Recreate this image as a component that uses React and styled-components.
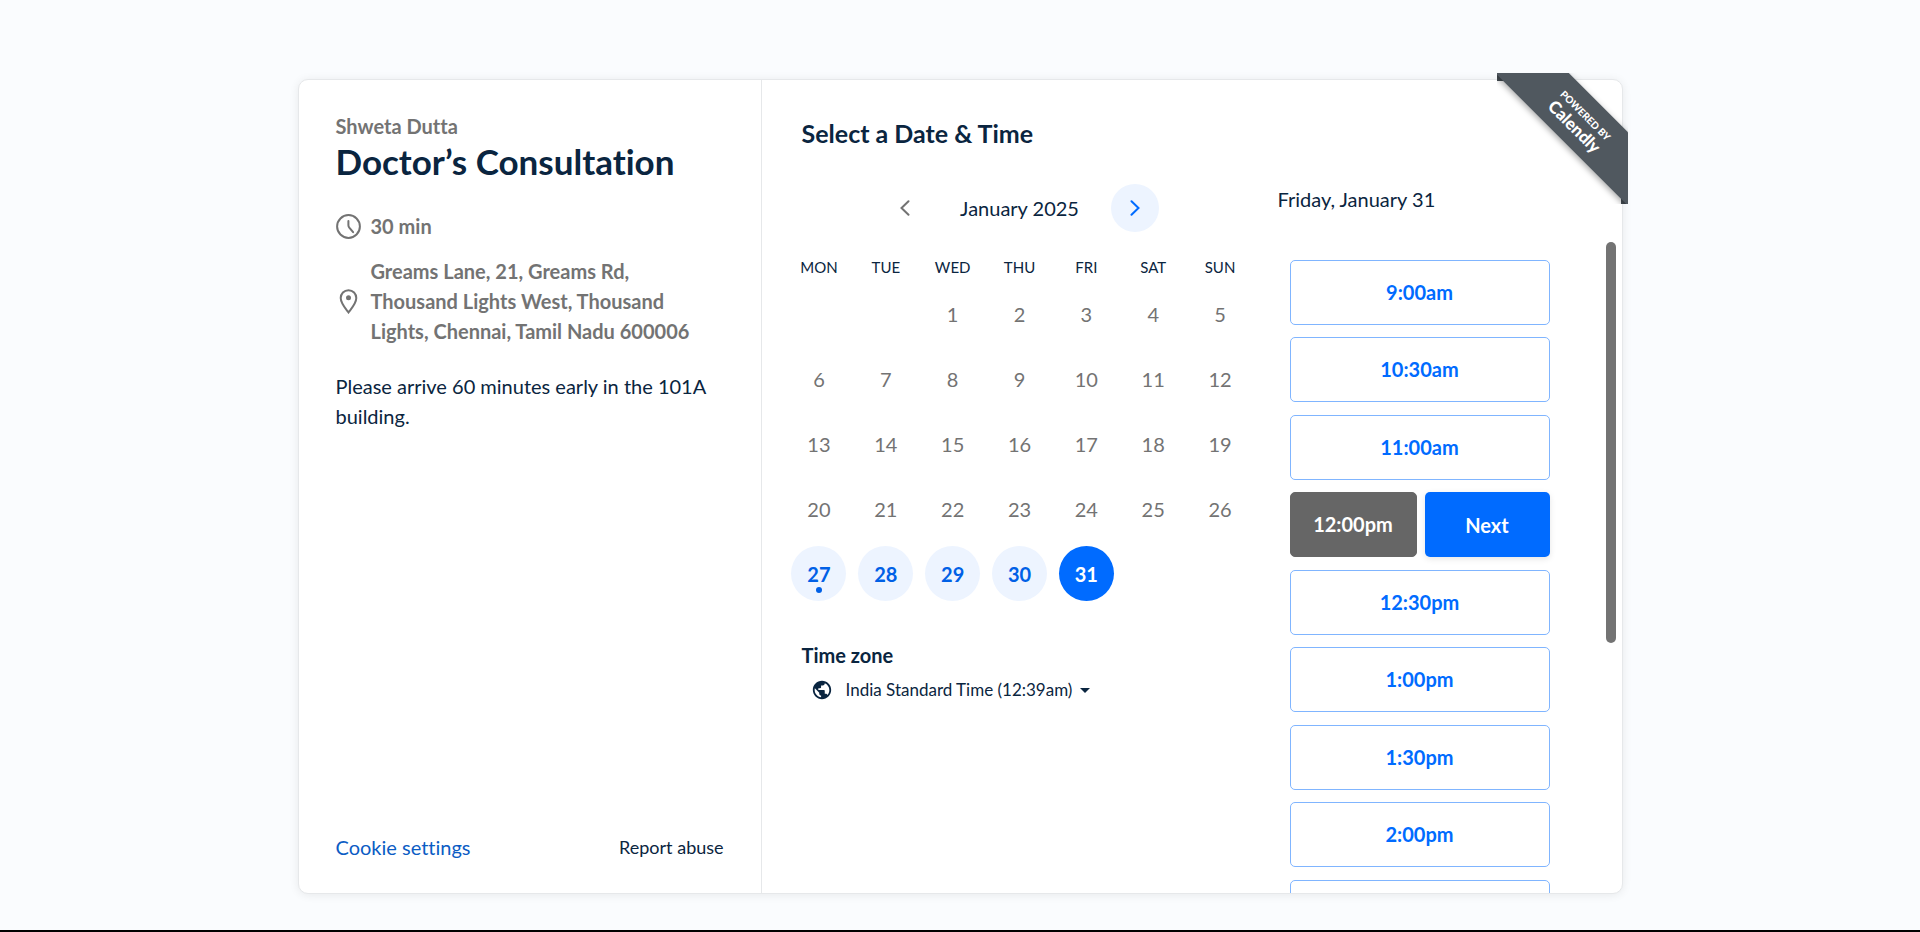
import { useState } from "react";
import styled, { createGlobalStyle } from "styled-components";
import { MdPublic } from "react-icons/md";

const weekDays = ["MON", "TUE", "WED", "THU", "FRI", "SAT", "SUN"];

const weeks = [
  [null, null, 1, 2, 3, 4, 5],
  [6, 7, 8, 9, 10, 11, 12],
  [13, 14, 15, 16, 17, 18, 19],
  [20, 21, 22, 23, 24, 25, 26],
  [27, 28, 29, 30, 31, null, null],
];

const slots = [
  "9:00am",
  "10:30am",
  "11:00am",
  "12:00pm",
  "12:30pm",
  "1:00pm",
  "1:30pm",
  "2:00pm",
  "2:30pm",
];

const today = 27;

const ClockIcon = () => (
  <svg width="25" height="25" viewBox="0 0 25 25" fill="none" stroke="currentColor" strokeWidth="2" aria-hidden="true">
    <circle cx="12.5" cy="12.5" r="11.4" />
    <path d="M12.4 7v4.2c0 1 .3 1.6.9 2.4l3.8 4.600" strokeLinecap="round" />
  </svg>
);

const PinIcon = () => (
  <svg width="25" height="25" viewBox="0 0 25 25" fill="none" stroke="currentColor" strokeWidth="2" aria-hidden="true">
    <path d="M12.5 1.2c-4.500 0-7.800 3.400-7.800 7.900 0 5.300 4.600 10.200 7.800 14.400 3.200-4.200 7.800-9.100 7.800-14.400 0-4.500-3.300-7.900-7.800-7.900z" />
    <circle cx="12.5" cy="8.8" r="2.5" fill="currentColor" stroke="none" />
  </svg>
);

const Chevron = ({ right }) => (
  <svg width="10" height="16" viewBox="0 0 10 16" fill="none" stroke="currentColor" strokeWidth="2" aria-hidden="true">
    <path d={right ? "M1.5 1.2L8.5 8l-7 6.8" : "M8.5 1.2L1.5 8l7 6.8"} strokeLinecap="round" />
  </svg>
);

const EventInfo = () => (
  <InfoPanel>
    <Host>Shweta Dutta</Host>
    <Title>Doctor’s Consultation</Title>
    <Detail>
      <ClockIcon />
      <span>30 min</span>
    </Detail>
    <Detail>
      <PinIcon />
      <span>
        Greams Lane, 21, Greams Rd, Thousand Lights West, Thousand Lights, Chennai, Tamil Nadu 600006
      </span>
    </Detail>
    <Description>Please arrive 60 minutes early in the 101A building.</Description>
    <InfoFooter>
      <CookieLink href="#cookies">Cookie settings</CookieLink>
      <ReportButton type="button">Report abuse</ReportButton>
    </InfoFooter>
  </InfoPanel>
);

const Calendar = ({ selectedDay, setSelectedDay }) => (
  <>
    <MonthNav>
      <NavButton type="button" aria-label="Previous month" disabled>
        <Chevron />
      </NavButton>
      <span>January 2025</span>
      <NavButton type="button" aria-label="Next month">
        <Chevron right />
      </NavButton>
    </MonthNav>
    <Month>
      <thead>
        <tr>
          {weekDays.map((day) => (
            <th key={day} scope="col">{day}</th>
          ))}
        </tr>
      </thead>
      <tbody>
        {weeks.map((week, i) => (
          <tr key={i}>
            {week.map((day, j) => (
              <td key={j}>
                {day && (
                  <Day
                    type="button"
                    disabled={day < today}
                    $selected={day === selectedDay}
                    $today={day === today}
                    onClick={() => setSelectedDay(day)}
                  >
                    {day}
                  </Day>
                )}
              </td>
            ))}
          </tr>
        ))}
      </tbody>
    </Month>
  </>
);

const TimeZone = () => (
  <ZoneSection>
    <ZoneLabel htmlFor="timezone">Time zone</ZoneLabel>
    <ZoneField>
      <MdPublic size={22} aria-hidden="true" />
      <ZoneSelect id="timezone">
        <option>India Standard Time (12:39am)</option>
      </ZoneSelect>
      <svg width="10" height="5" viewBox="0 0 10 5" aria-hidden="true">
        <path d="M0 0h10L5 5z" fill="currentColor" />
      </svg>
    </ZoneField>
  </ZoneSection>
);

const App = () => {
  const [selectedDay, setSelectedDay] = useState(31);
  const [selectedSlot, setSelectedSlot] = useState("12:00pm");

  return (
    <Page>
      <GlobalStyle />
      <Card>
        <EventInfo />
        <Booking>
          <CalendarColumn>
            <Heading>Select a Date &amp; Time</Heading>
            <Calendar selectedDay={selectedDay} setSelectedDay={setSelectedDay} />
            <TimeZone />
          </CalendarColumn>
          <SlotColumn>
            <SlotDate>Friday, January {selectedDay}</SlotDate>
            <Scroller>
              <SlotList>
                {slots.map((slot) => (
                  <li key={slot}>
                    <SlotButton
                      type="button"
                      $selected={slot === selectedSlot}
                      onClick={() => setSelectedSlot(slot)}
                    >
                      {slot}
                    </SlotButton>
                    {slot === selectedSlot && <NextButton type="button">Next</NextButton>}
                  </li>
                ))}
              </SlotList>
              <ScrollTrack>
                <ScrollThumb />
              </ScrollTrack>
            </Scroller>
          </SlotColumn>
        </Booking>
        <Badge>
          <Ribbon href="#calendly">
            <small>POWERED BY</small>
            Calendly
          </Ribbon>
        </Badge>
      </Card>
    </Page>
  );
};

export default App;

const GlobalStyle = createGlobalStyle`
  *, *::before, *::after {
    box-sizing: border-box;
  }

  body {
    margin: 0;
    background: #fafcfe;
    color: #0a2540;
    font-family: Lato, "Open Sans", sans-serif;
    font-size: 20px;
    font-variant-ligatures: none;
    line-height: 30px;
  }

  button, select {
    margin: 0;
    padding: 0;
    border: 0;
    background: none;
    color: inherit;
    font: inherit;
    cursor: pointer;
  }
`;

const Page = styled.main`
  display: flex;
  justify-content: center;
  height: 100vh;
  min-height: 720px;
  padding: 79px 24px 36px;
  border-bottom: 2px solid #000;
`;

const Card = styled.div`
  position: relative;
  display: flex;
  width: 100%;
  max-width: 1325px;
  background: #fff;
  border: 1px solid #e6e8ea;
  border-radius: 10px;
  box-shadow: 0 1px 10px rgba(0, 0, 0, 0.08);
`;

const InfoPanel = styled.section`
  display: flex;
  flex-direction: column;
  flex: 0 0 35%;
  padding: 31px 37px;
  border-right: 1px solid #e6e8ea;
`;

const Host = styled.div`
  color: #737373;
  font-weight: 700;
`;

const Title = styled.h1`
  margin: 0 0 30px;
  font-size: 35px;
  line-height: 40px;
`;

const Detail = styled.div`
  display: flex;
  align-items: center;
  gap: 10px;
  margin-bottom: 15px;
  color: #737373;
  font-weight: 700;

  svg {
    flex: none;
  }

  span {
    max-width: 340px;
  }
`;

const Description = styled.p`
  margin: 10px 0 0;
`;

const InfoFooter = styled.div`
  display: flex;
  align-items: center;
  justify-content: space-between;
  margin-top: auto;
`;

const CookieLink = styled.a`
  color: #0b5cc4;
  text-decoration: none;
`;

const ReportButton = styled.button`
  font-size: 18px;
`;

const Booking = styled.section`
  display: flex;
  flex: 1;
  min-width: 0;
`;

const CalendarColumn = styled.div`
  display: flex;
  flex-direction: column;
  flex: 1;
  padding: 38px 8px 0 24px;
`;

const Heading = styled.h2`
  margin: 0 0 36px 16px;
  font-size: 25px;
  line-height: 30px;
`;

const MonthNav = styled.div`
  display: flex;
  align-items: center;
  justify-content: space-between;
  align-self: center;
  width: 278px;
  margin-bottom: 25px;
`;

const NavButton = styled.button`
  display: flex;
  align-items: center;
  justify-content: center;
  width: 48px;
  height: 48px;
  border-radius: 50%;
  background: #edf4ff;
  color: #006bff;

  &:disabled {
    background: none;
    color: #737373;
    cursor: default;
  }
`;

const Month = styled.table`
  width: 100%;
  table-layout: fixed;
  border-collapse: collapse;
  text-align: center;

  th {
    height: 24px;
    padding: 0 0 4px;
    font-size: 15px;
    font-weight: 400;
    line-height: 20px;
  }

  td {
    height: 65px;
    padding: 0;
  }
`;

const Day = styled.button`
  position: relative;
  display: block;
  width: 55px;
  height: 55px;
  margin: 0 auto;
  border-radius: 50%;
  background: ${(props) => (props.$selected ? "#006bff" : "#edf4ff")};
  color: ${(props) => (props.$selected ? "#fff" : "#0060e6")};
  font-weight: 700;

  &:disabled {
    background: none;
    color: #737373;
    font-weight: 400;
    cursor: default;
  }

  &::after {
    content: "";
    display: ${(props) => (props.$today ? "block" : "none")};
    position: absolute;
    bottom: 8px;
    left: 50%;
    width: 6px;
    height: 6px;
    margin-left: -3px;
    border-radius: 50%;
    background: currentColor;
  }
`;

const ZoneSection = styled.div`
  margin: 34px 0 0 16px;
`;

const ZoneLabel = styled.label`
  font-weight: 700;
`;

const ZoneField = styled.div`
  display: flex;
  align-items: center;
  height: 40px;
  padding-left: 9px;

  svg:last-child {
    margin-left: 6px;
    pointer-events: none;
  }
`;

const ZoneSelect = styled.select`
  margin-left: 13px;
  appearance: none;
  font-size: 17px;
`;

const SlotColumn = styled.div`
  display: flex;
  flex-direction: column;
  flex: 0 0 360px;
  min-height: 0;
  padding-top: 104px;
`;

const SlotDate = styled.div`
  margin: 0 0 28px 16px;
`;

const Scroller = styled.div`
  display: flex;
  flex: 1;
  justify-content: space-between;
  min-height: 0;
  padding: 0 6px 0 28px;
`;

const SlotList = styled.ul`
  display: flex;
  flex-direction: column;
  gap: 12px;
  flex: 0 0 268px;
  margin: 0;
  padding: 18px 8px 0 0;
  overflow-y: auto;
  scrollbar-width: none;
  list-style: none;

  li {
    display: flex;
    flex: none;
    gap: 8px;
  }

  li:nth-child(even) {
    margin-bottom: 1px;
  }
`;

const SlotButton = styled.button`
  flex: 1;
  height: 65px;
  padding-bottom: 2px;
  border: 1px solid ${(props) => (props.$selected ? "#666" : "#80b5ff")};
  border-radius: 5px;
  background: ${(props) => (props.$selected ? "#666" : "#fff")};
  color: ${(props) => (props.$selected ? "#fff" : "#006bff")};
  font-weight: 700;
`;

const NextButton = styled.button`
  flex: 1;
  height: 65px;
  border-radius: 5px;
  background: #006bff;
  box-shadow: 0 2px 6px rgba(0, 0, 0, 0.1);
  color: #fff;
  font-weight: 700;
`;

const ScrollTrack = styled.div`
  width: 10px;
`;

const ScrollThumb = styled.div`
  height: calc(100% * 8 / 13);
  border-radius: 5px;
  background: #737373;
`;

// corner ribbon, folded over the top and right edges of the card
const Badge = styled.div`
  position: absolute;
  top: -7px;
  right: -6px;
  width: 131px;
  height: 131px;
  overflow: hidden;

  &::before, &::after {
    content: "";
    position: absolute;
    background: #464e54;
  }

  &::before {
    top: 0;
    left: 0;
    width: 7px;
    height: 8px;
  }

  &::after {
    right: 0;
    bottom: 0;
    width: 7px;
    height: 7px;
  }
`;

const Ribbon = styled.a`
  position: absolute;
  z-index: 1;
  top: 22px;
  left: -17px;
  width: 200px;
  height: 52px;
  padding-top: 12px;
  background: #50585f;
  box-shadow: 0 2px 6px rgba(0, 0, 0, 0.35);
  color: #fff;
  font-size: 17px;
  font-weight: 900;
  line-height: 20px;
  text-align: center;
  text-decoration: none;
  transform: rotate(45deg);

  small {
    display: block;
    font-size: 10px;
    line-height: 12px;
  }
`;
